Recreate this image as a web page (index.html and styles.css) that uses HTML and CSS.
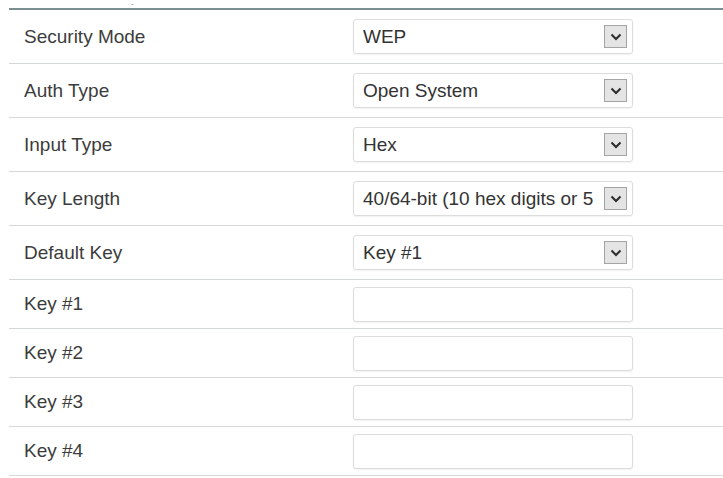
FILE: index.html
```html
<!DOCTYPE html>
<html lang="en">
<head>
    <meta charset="UTF-8">
    <meta name="viewport" content="width=device-width, initial-scale=1.0">
    <title>Wireless Security</title>
    <link rel="stylesheet" href="styles.css">
</head>
<body>
    <div class="tick">-</div>
    <div class="settings">
        <div class="row tall">
            <div class="label">Security Mode</div>
            <div class="select"><span class="value">WEP</span><span class="arrow"><svg width="12" height="8" viewBox="0 0 12 8"><path d="M1.5 1.5 L6 6 L10.5 1.5" /></svg></span></div>
        </div>
        <div class="row tall">
            <div class="label">Auth Type</div>
            <div class="select"><span class="value">Open System</span><span class="arrow"><svg width="12" height="8" viewBox="0 0 12 8"><path d="M1.5 1.5 L6 6 L10.5 1.5" /></svg></span></div>
        </div>
        <div class="row tall">
            <div class="label">Input Type</div>
            <div class="select"><span class="value">Hex</span><span class="arrow"><svg width="12" height="8" viewBox="0 0 12 8"><path d="M1.5 1.5 L6 6 L10.5 1.5" /></svg></span></div>
        </div>
        <div class="row tall">
            <div class="label">Key Length</div>
            <div class="select"><span class="value">40/64-bit (10 hex digits or 5</span><span class="arrow"><svg width="12" height="8" viewBox="0 0 12 8"><path d="M1.5 1.5 L6 6 L10.5 1.5" /></svg></span></div>
        </div>
        <div class="row tall">
            <div class="label">Default Key</div>
            <div class="select"><span class="value">Key #1</span><span class="arrow"><svg width="12" height="8" viewBox="0 0 12 8"><path d="M1.5 1.5 L6 6 L10.5 1.5" /></svg></span></div>
        </div>
        <div class="row">
            <div class="label">Key #1</div>
            <input class="field" type="text">
        </div>
        <div class="row">
            <div class="label">Key #2</div>
            <input class="field" type="text">
        </div>
        <div class="row">
            <div class="label">Key #3</div>
            <input class="field" type="text">
        </div>
        <div class="row">
            <div class="label">Key #4</div>
            <input class="field" type="text">
        </div>
    </div>
</body>
</html>
```
FILE: styles.css
```css
body {
    margin: 0;
    background-color: #fff;
    font-family: "Liberation Sans", Arial, sans-serif;
    color: #3c3c3c;
}
.tick {
    height: 8px;
    margin-left: 131px;
    font-size: 8px;
    line-height: 8px;
    color: #777;
}
.settings {
    margin-left: 9px;
    border-top: 2px solid #7d8d94;
}
.row {
    display: grid;
    grid-template-columns: 344px 280px;
    align-items: center;
    height: 48px;
    border-bottom: 1px solid #d6d9d9;
}
.row.tall {
    height: 53px;
}
.label {
    padding-left: 15px;
    font-size: 19px;
}
.select {
    display: flex;
    align-items: center;
    height: 35px;
    box-sizing: border-box;
    padding: 0 5px 0 9px;
    border: 1px solid #dcdcdc;
    border-radius: 3px;
    box-shadow: 0 1px 2px rgba(0, 0, 0, 0.06);
    font-size: 19px;
    color: #333;
}
.value {
    flex: 1;
    overflow: hidden;
    white-space: nowrap;
}
.arrow {
    display: flex;
    align-items: center;
    justify-content: center;
    width: 21px;
    height: 21px;
    margin-left: 2px;
    background-color: #e4e4e4;
    border: 1px solid #a4a4a4;
}
.arrow path {
    fill: none;
    stroke: #2b2b2b;
    stroke-width: 2;
}
.field {
    height: 35px;
    box-sizing: border-box;
    border: 1px solid #dcdcdc;
    border-radius: 3px;
    box-shadow: 0 1px 2px rgba(0, 0, 0, 0.06);
    margin: 0;
    padding: 0 8px;
    font-size: 16px;
}
```
